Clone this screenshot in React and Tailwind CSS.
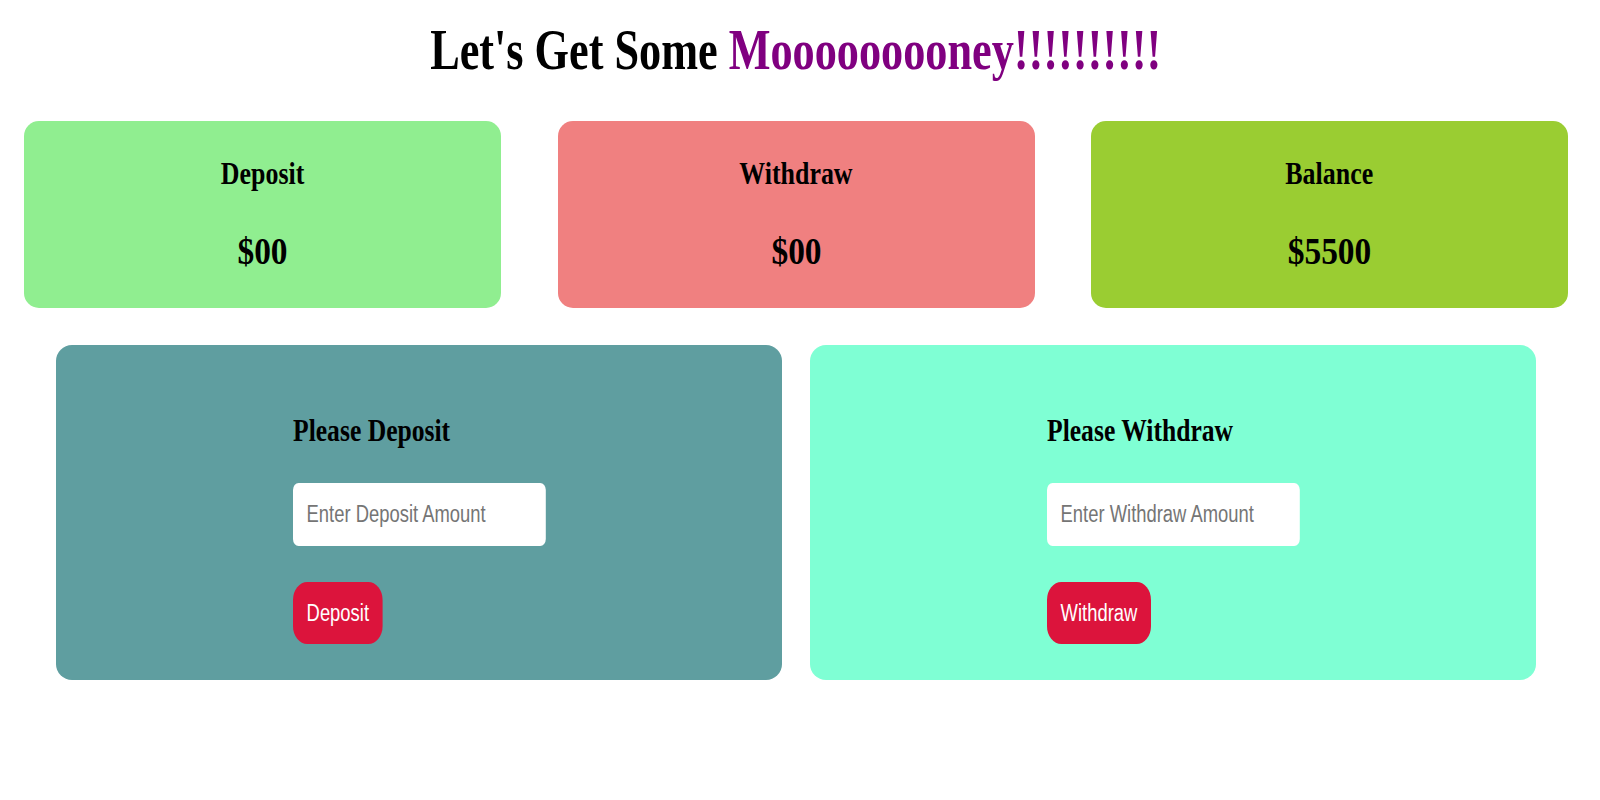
import React, { useState } from "react";

const serif = "font-['Liberation_Serif','Times_New_Roman',serif]";
const sans = "font-['Liberation_Sans',Arial,sans-serif]";

const StatCard = ({ title, amount, color }) => (
  <div className={`w-[477px] h-[187px] rounded-[15px] pt-[36px] flex flex-col items-center ${color}`}>
    <h3 className={`${serif} text-[32px] leading-[32px] font-bold text-black scale-x-[0.81]`}>
      {title}
    </h3>
    <p className={`${serif} mt-[43px] text-[38px] leading-[38px] font-bold text-black scale-x-[0.88]`}>
      ${amount}
    </p>
  </div>
);

const ActionPanel = ({ title, placeholder, label, color, value, onChange, onSubmit }) => (
  <div className={`flex-1 h-[335px] rounded-[16px] pt-[69px] ${color}`}>
    <form
      onSubmit={onSubmit}
      className="w-[253px] mx-auto flex flex-col items-start"
    >
      <h2 className={`${serif} text-[32px] leading-[32px] font-bold text-black scale-x-[0.8] origin-left whitespace-nowrap`}>
        {title}
      </h2>
      <input
        type="number"
        placeholder={placeholder}
        value={value}
        onChange={onChange}
        className={`${sans} mt-[37px] w-[316px] h-[63px] shrink-0 pl-[17px] bg-white rounded-[7px] text-[23px] text-black placeholder:text-[#757575] outline-none scale-x-[0.8] origin-left`}
      />
      <button
        type="submit"
        className={`${sans} mt-[36px] h-[62px] px-[17px] rounded-[18px] bg-[#DC143C] text-white text-[23px] scale-x-[0.8] origin-left`}
      >
        {label}
      </button>
    </form>
  </div>
);

const App = () => {
  const [deposit, setDeposit] = useState(0);
  const [withdraw, setWithdraw] = useState(0);
  const [balance, setBalance] = useState(5500);
  const [depositInput, setDepositInput] = useState("");
  const [withdrawInput, setWithdrawInput] = useState("");

  const handleDeposit = (e) => {
    e.preventDefault();
    const amt = Number(depositInput);
    if (!amt) return;
    setDeposit(amt);
    setBalance(balance + amt);
    setDepositInput("");
  };

  const handleWithdraw = (e) => {
    e.preventDefault();
    const amt = Number(withdrawInput);
    if (!amt || amt > balance) return;
    setWithdraw(amt);
    setBalance(balance - amt);
    setWithdrawInput("");
  };

  const fmt = (n) => (n === 0 ? "00" : String(n));

  return (
    <div className="w-[1592px] min-h-screen bg-white pt-[22px]">
      <h1 className={`${serif} text-center text-[56px] leading-[56px] font-bold text-black`}>
        <span className="inline-block scale-x-[0.79] whitespace-nowrap">
          Let's Get Some <span className="text-[#800080]">Mooooooooney!!!!!!!!!!</span>
        </span>
      </h1>

      <div className="mt-[43px] px-[24px] flex justify-between">
        <StatCard title="Deposit" amount={fmt(deposit)} color="bg-[#90EE90]" />
        <StatCard title="Withdraw" amount={fmt(withdraw)} color="bg-[#F08080]" />
        <StatCard title="Balance" amount={fmt(balance)} color="bg-[#9ACD32]" />
      </div>

      <div className="mt-[37px] px-[56px] flex gap-[28px]">
        <ActionPanel
          title="Please Deposit"
          placeholder="Enter Deposit Amount"
          label="Deposit"
          color="bg-[#5F9EA0]"
          value={depositInput}
          onChange={(e) => setDepositInput(e.target.value)}
          onSubmit={handleDeposit}
        />
        <ActionPanel
          title="Please Withdraw"
          placeholder="Enter Withdraw Amount"
          label="Withdraw"
          color="bg-[#7FFFD4]"
          value={withdrawInput}
          onChange={(e) => setWithdrawInput(e.target.value)}
          onSubmit={handleWithdraw}
        />
      </div>
    </div>
  );
};

export default App;
